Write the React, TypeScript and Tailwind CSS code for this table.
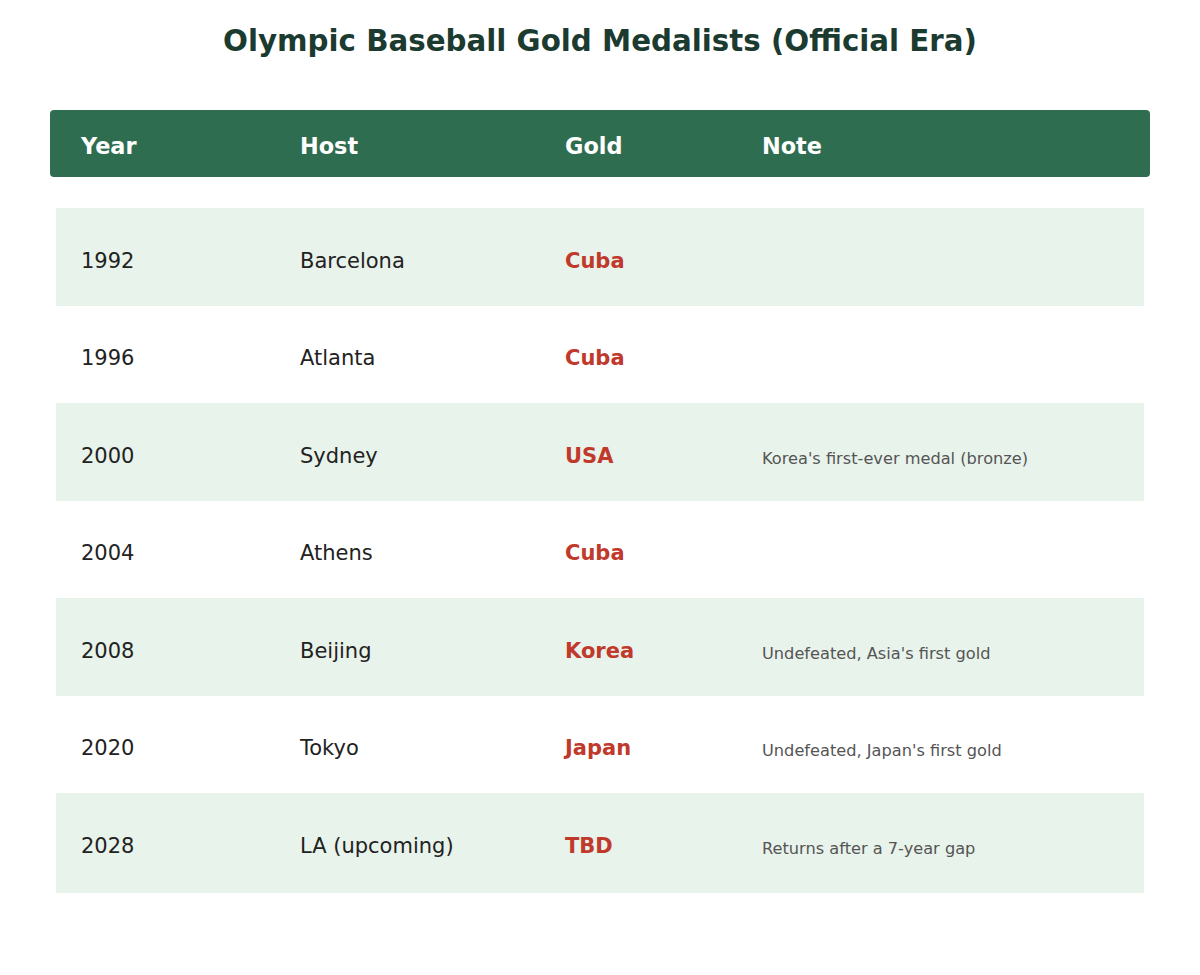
import React from "react";

const rows = [
  { year: "1992", host: "Barcelona", gold: "Cuba", note: "" },
  { year: "1996", host: "Atlanta", gold: "Cuba", note: "" },
  { year: "2000", host: "Sydney", gold: "USA", note: "Korea's first-ever medal (bronze)" },
  { year: "2004", host: "Athens", gold: "Cuba", note: "" },
  { year: "2008", host: "Beijing", gold: "Korea", note: "Undefeated, Asia's first gold" },
  { year: "2020", host: "Tokyo", gold: "Japan", note: "Undefeated, Japan's first gold" },
  { year: "2028", host: "LA (upcoming)", gold: "TBD", note: "Returns after a 7-year gap" },
];

export default function App() {
  return (
    <div
      className="w-[1200px] h-[975px] bg-white px-[50px] pt-[24px]"
      style={{ fontFamily: '"DejaVu Sans", sans-serif' }}
    >
      <h1 className="text-center text-[29.3px] font-bold leading-[34px] text-[#1b3a30]">
        Olympic Baseball Gold Medalists (Official Era)
      </h1>
      <div className="mt-[52px] h-[67px] rounded-[4px] bg-[#2f6d50] px-[6px] flex items-center">
        <div className="grid w-full grid-cols-[219px_265px_197px_1fr] text-[22.4px] font-bold text-white leading-[26px] pt-[5px]">
          <div className="pl-[25px]">Year</div>
          <div className="pl-[25px]">Host</div>
          <div className="pl-[25px]">Gold</div>
          <div className="pl-[25px]">Note</div>
        </div>
      </div>
      <div className="mt-[31px] px-[6px]">
        {rows.map((r, i) => (
          <div
            key={r.year}
            className={`grid grid-cols-[219px_265px_197px_1fr] items-baseline pt-[40.5px] ${
              i === rows.length - 1 ? "h-[100px]" : "h-[97.5px]"
            } ${i % 2 === 0 ? "bg-[#e8f3eb]" : "bg-white"}`}
          >
            <div className="pl-[25px] text-[21px] leading-[24px] text-[#222222]">{r.year}</div>
            <div className="pl-[25px] text-[21px] leading-[24px] text-[#222222]">{r.host}</div>
            <div className="pl-[25px] text-[21px] leading-[24px] font-bold text-[#c0392b]">{r.gold}</div>
            <div className="pl-[25px] text-[16.2px] leading-[24px] text-[#555555] translate-y-[1px]">{r.note}</div>
          </div>
        ))}
      </div>
    </div>
  );
}
